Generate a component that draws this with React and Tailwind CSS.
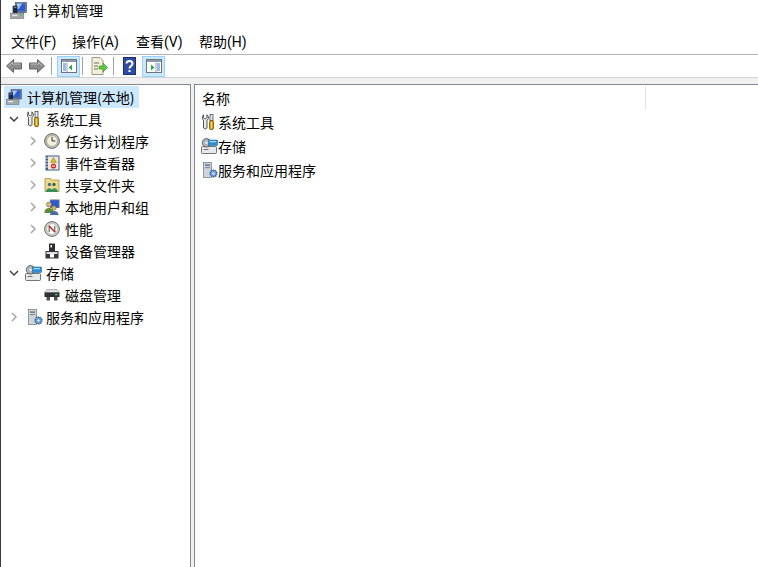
import React from "react";

function Computer({ s = 16 }) {
  return (
    <svg width={s} height={s} viewBox="0 0 16 16" className="shrink-0">
      <rect x="5" y="0.500" width="10.500" height="9.500" fill="#6b7892" stroke="#4d5a74" strokeWidth="0.6" />
      <rect x="6.500" y="1.500" width="7.500" height="7" fill="#2b5fd0" />
      <path d="M6.500 1.500h5l-3.500 5H6.500z" fill="#a9c8f2" />
      <rect x="2.500" y="3.500" width="4.500" height="7" fill="#1f2a44" />
      <rect x="3.500" y="4.500" width="2.500" height="1" fill="#7f8ba5" />
      <rect x="0.500" y="10.500" width="12.500" height="5" fill="#a2a8ad" stroke="#6f767c" strokeWidth="0.6" />
      <rect x="2" y="12" width="5" height="1.200" fill="#e6e8ea" />
      <rect x="9.500" y="12" width="1.500" height="1.200" fill="#49c45a" />
    </svg>
  );
}
function Tools() {
  return (
    <svg width="12" height="16" viewBox="0 0 12 16" className="shrink-0">
      <path d="M1.500 0.800v3L3.200 5l1.700-1.200v-3L6.300 2.500v2.300L5 6.500v7.500Q3.200 16 1.500 14V6.500L0.300 4.800V2.500z" fill="#e8e9ea" stroke="#3e4246" strokeWidth="0.900" />
      <rect x="8" y="0.500" width="3" height="6" fill="#e4e5e5" stroke="#4d5155" strokeWidth="0.800" />
      <rect x="7.600" y="6.500" width="3.800" height="9" rx="1.200" fill="#e9aa10" stroke="#5e4500" strokeWidth="0.800" />
      <path d="M9.500 8v6" stroke="#fbe08a" strokeWidth="0.800" />
    </svg>
  );
}
function Clock() {
  return (
    <svg width="16" height="16" viewBox="0 0 16 16" className="shrink-0">
      <circle cx="8" cy="8" r="7.400" fill="#c7c2ae" stroke="#666b70" />
      <circle cx="8" cy="8" r="5.400" fill="#f5f0dd" stroke="#8f8f86" strokeWidth="0.600" />
      <path d="M8 3.800V8h3.400" fill="none" stroke="#2d2d2d" strokeWidth="1" />
    </svg>
  );
}
function EventLog() {
  return (
    <svg width="16" height="16" viewBox="0 0 16 16" className="shrink-0">
      <rect x="1.500" y="0.500" width="14" height="15" fill="#3f5b8c" />
      <rect x="4" y="1.500" width="10.500" height="13" fill="#eee9d8" />
      <path d="M1 3h3M1 6h3M1 9h3M1 12h3" stroke="#e2e8f2" />
      <path d="M9.500 2.500l2.800 4.800H6.700z" fill="#e9c520" stroke="#6f5c0c" strokeWidth="0.500" />
      <circle cx="9.500" cy="11" r="2.600" fill="#d42c28" />
      <rect x="8" y="10.500" width="3" height="1" fill="#fff" />
    </svg>
  );
}
function Shared() {
  return (
    <svg width="16" height="16" viewBox="0 0 16 16" className="shrink-0">
      <path d="M1 1.500h5.500l1 1.500H15v11.500H1z" fill="#f0d98e" stroke="#a98f3e" strokeWidth="0.800" />
      <circle cx="5.500" cy="7.500" r="1.700" fill="#50698f" />
      <circle cx="10" cy="7.500" r="1.700" fill="#2f6f42" />
      <path d="M2 15c0-5 6.500-5 6.500 0zM7 15c0-5 6.800-5 6.800 0z" fill="#3a8e5a" />
    </svg>
  );
}
function Users() {
  return (
    <svg width="16" height="16" viewBox="0 0 16 16" className="shrink-0">
      <rect x="6" y="0.500" width="9.500" height="8.500" fill="#5e6f90" />
      <rect x="7" y="1.500" width="7.500" height="6.500" fill="#2a5bd0" />
      <circle cx="5" cy="5.500" r="2.600" fill="#d9b877" stroke="#6f5220" strokeWidth="0.500" />
      <path d="M0.500 13c0-5.500 9-5.500 9 0v1h-9z" fill="#5c8a38" />
      <circle cx="10" cy="9" r="2.200" fill="#d9b877" stroke="#6f5220" strokeWidth="0.500" />
      <path d="M6 16c0-5.500 8.500-5.500 8.500 0z" fill="#476aa8" />
    </svg>
  );
}
function Perf() {
  return (
    <svg width="16" height="16" viewBox="0 0 16 16" className="shrink-0">
      <circle cx="8" cy="8" r="7.400" fill="#d6d3c6" stroke="#666b70" />
      <circle cx="8" cy="8" r="5.400" fill="#fff" stroke="#9c9c9c" strokeWidth="0.600" />
      <path d="M5.200 11V5l5.600 6V5" fill="none" stroke="#303030" strokeWidth="0.900" />
      <path d="M4.800 4.800l6.400 6.400" stroke="#c8261e" strokeWidth="1.500" />
    </svg>
  );
}
function Device() {
  return (
    <svg width="16" height="16" viewBox="0 0 16 16" className="shrink-0">
      <rect x="5" y="0.500" width="6" height="8" fill="#2a2d32" />
      <rect x="6.500" y="2" width="1.500" height="2.500" fill="#fff" />
      <rect x="1.500" y="8" width="13" height="7.500" fill="#34373c" />
      <rect x="2.500" y="9" width="11" height="2" fill="#dcdedf" />
      <rect x="6" y="11" width="4" height="3.500" fill="#fff" />
    </svg>
  );
}
function Storage() {
  return (
    <svg width="17" height="16" viewBox="0 0 17 16" className="shrink-0">
      <rect x="0.500" y="8.500" width="15" height="7" rx="1" fill="#e6e8ea" stroke="#4f545a" strokeWidth="0.800" />
      <rect x="2.500" y="11" width="5" height="1" fill="#6e7278" />
      <circle cx="5.500" cy="4.800" r="4.300" fill="#aeb3b8" stroke="#4f545a" strokeWidth="0.800" />
      <circle cx="5.500" cy="4.800" r="1.200" fill="#f0f0f0" />
      <rect x="7.500" y="2" width="9" height="5.500" fill="#2b8fd2" stroke="#1a5f96" strokeWidth="0.500" />
      <rect x="8.500" y="3" width="6.500" height="1.200" fill="#a8dcf8" />
    </svg>
  );
}
function Disk() {
  return (
    <svg width="16" height="16" viewBox="0 0 16 16" className="shrink-0">
      <path d="M3 2.500h10l2.500 3H.5z" fill="#dcdee1" stroke="#77797c" strokeWidth="0.500" />
      <rect x="0.500" y="5.500" width="15" height="4.500" fill="#2d3035" />
      <rect x="11" y="7" width="2.500" height="1.200" fill="#5fd06a" />
      <rect x="2.500" y="10" width="3.500" height="3.500" fill="#4e5155" />
      <rect x="10" y="10" width="3.500" height="3.500" fill="#4e5155" />
    </svg>
  );
}
function Services() {
  return (
    <svg width="16" height="16" viewBox="0 0 16 16" className="shrink-0">
      <rect x="1.500" y="0.500" width="8" height="15" fill="#cfd4da" stroke="#69727e" strokeWidth="0.700" />
      <rect x="3" y="2.500" width="5" height="1.200" fill="#535c68" />
      <rect x="3" y="5" width="5" height="1.200" fill="#858d98" />
      <circle cx="11.500" cy="11.500" r="3.400" fill="#6e9fd4" stroke="#3a6394" strokeWidth="1.400" strokeDasharray="1.400 0.700" />
      <circle cx="11.500" cy="11.500" r="1.100" fill="#fff" />
    </svg>
  );
}
function Chevron({ open, hidden }) {
  if (hidden) return <span className="w-[10px] shrink-0" />;
  return (
    <svg width="10" height="10" viewBox="0 0 10 10" className="shrink-0">
      {open ? (
        <path d="M1 3l4 4 4-4" fill="none" stroke="#404040" strokeWidth="1.500" />
      ) : (
        <path d="M3 1l4 4-4 4" fill="none" stroke="#a6a6a6" strokeWidth="1.500" />
      )}
    </svg>
  );
}
function Arrow({ dir }) {
  return (
    <svg width="16" height="14" viewBox="0 0 16 14" className="shrink-0">
      <path
        d={dir === "l" ? "M0.500 7l7-6.500V4h8v6h-8v3.500z" : "M15.500 7l-7-6.500V4h-8v6h8v3.500z"}
        fill="#8c8c8c"
        stroke="#646464"
      />
      <path d={dir === "l" ? "M2.500 7l4-3.500V5h8" : "M13.500 7l-4-3.500V5h-8"} fill="none" stroke="#c8c8c8" strokeWidth="0.800" />
    </svg>
  );
}
function Pane({ side }) {
  return (
    <svg width="16" height="16" viewBox="0 0 16 16" className="shrink-0">
      <rect x="0.500" y="1.500" width="15" height="13" fill="#fff" stroke="#6d7480" />
      <rect x="1" y="2" width="14" height="2" fill="#8e99a8" />
      {side === "l" ? (
        <>
          <path d="M2 6h3M2 8h3M2 10h3M2 12h3" stroke="#3f74c8" />
          <path d="M6 4.500v9.500" stroke="#9aa2ae" />
          <path d="M11 6.500v6l-3.500-3z" fill="#2fa84a" />
        </>
      ) : (
        <>
          <path d="M11 6h3M11 8h3M11 10h3M11 12h3" stroke="#3f74c8" />
          <path d="M10 4.500v9.500" stroke="#9aa2ae" />
          <path d="M5 6.500v6l3.500-3z" fill="#2fa84a" />
        </>
      )}
    </svg>
  );
}
function Export() {
  return (
    <svg width="17" height="18" viewBox="0 0 17 18" className="shrink-0">
      <path d="M1 .5h8l3 3v14H1z" fill="#f5efd8" stroke="#9a9a88" />
      <path d="M3 6h5M3 9h4M3 12h4" stroke="#6a6a6a" />
      <path d="M8 9h4V6l4.500 4.500L12 15v-3H8z" fill="#5cc63f" stroke="#3b8f2a" strokeWidth="0.600" />
    </svg>
  );
}
function Help() {
  return (
    <svg width="13" height="18" viewBox="0 0 13 18" className="shrink-0">
      <rect x="0.500" y="0.500" width="12" height="17" fill="#2e4ca2" stroke="#1c2f70" />
      <path d="M3.500 6.500C3.500 3 9.500 3 9.500 6.500 9.500 9 6.500 9 6.500 11.500" fill="none" stroke="#fff" strokeWidth="2" />
      <rect x="5.500" y="13" width="2" height="2" fill="#fff" />
    </svg>
  );
}
function Divider() {
  return <span className="h-[18px] w-px bg-[#a0a0a0] shrink-0" />;
}

function TreeRow({ indent, open, noChev, Icon, label, center }) {
  return (
    <div className={`flex items-center h-[22px] ${indent}`}>
      <Chevron open={open} hidden={noChev} />
      <span className={`flex items-center ml-[6px] w-[21px] ${center ? "pl-[2px]" : ""}`}><Icon /></span>
      <span className="text-[14px] text-black whitespace-nowrap leading-[22px]">{label}</span>
    </div>
  );
}

function ListRow({ Icon, label, offset }) {
  return (
    <div className="flex items-center h-[24px] pl-[6px]">
      <span className={`flex w-[17px] items-center ${offset ? "pl-[1px]" : ""}`}><Icon /></span>
      <span className="text-[14px] text-black whitespace-nowrap">{label}</span>
    </div>
  );
}

export default function App() {
  return (
    <div className="w-[758px] h-[567px] overflow-hidden bg-white flex flex-col font-['Noto_Sans_CJK_SC','Liberation_Sans',sans-serif] border-l border-[#3a3a3a]">
      <div className="h-[21px] flex items-center pl-[9px] gap-[6px] shrink-0">
        <Computer s={17} />
        <span className="text-[14px] text-black">计算机管理</span>
      </div>
      <div className="h-[33px] pt-[9px] flex items-center pl-[10px] text-[14px] text-black shrink-0 font-['Roboto','Noto_Sans_CJK_SC',sans-serif]">
        <span className="w-[61px]">文件(F)</span>
        <span className="w-[64px]">操作(A)</span>
        <span className="w-[63px]">查看(V)</span>
        <span>帮助(H)</span>
      </div>
      <div className="h-[23px] border-t border-[#b4b4b4] flex items-center pl-[5px] shrink-0">
        <Arrow dir="l" />
        <span className="w-[7px]" />
        <Arrow dir="r" />
        <span className="w-[6px]" />
        <Divider />
        <span className="ml-[5px] w-[23px] h-[21px] flex items-center justify-center bg-[#cce8ff] border border-[#99d1ff]"><Pane side="l" /></span>
        <span className="w-[2px]" />
        <Divider />
        <span className="ml-[8px] mr-[5px]"><Export /></span>
        <Divider />
        <span className="ml-[9px] mr-[6px]"><Help /></span>
        <span className="w-[23px] h-[21px] flex items-center justify-center bg-[#cce8ff] border border-[#99d1ff]"><Pane side="r" /></span>
      </div>
      <div className="flex-1 min-h-0 flex flex-col bg-[#f0f0f0] border-t border-[#d4d4d4] pt-[6px]">
        <div className="flex-1 min-h-0 flex bg-[#f0f0f0]">
          <div className="w-[190px] bg-white border-t border-r border-[#828790] pl-[3px] pt-[1px] shrink-0">
            <div className="flex items-center h-[22px]">
              <span className="flex items-center h-[22px] bg-[#cce8ff] pl-[2px] pr-[5px] gap-[5px]">
                <Computer s={16} />
                <span className="text-[14px] text-black whitespace-nowrap">计算机管理(本地)</span>
              </span>
            </div>
            <TreeRow indent="pl-[5px]" open center Icon={Tools} label="系统工具" />
            <TreeRow indent="pl-[24px]" Icon={Clock} label="任务计划程序" />
            <TreeRow indent="pl-[24px]" Icon={EventLog} label="事件查看器" />
            <TreeRow indent="pl-[24px]" Icon={Shared} label="共享文件夹" />
            <TreeRow indent="pl-[24px]" Icon={Users} label="本地用户和组" />
            <TreeRow indent="pl-[24px]" Icon={Perf} label="性能" />
            <TreeRow indent="pl-[24px]" noChev Icon={Device} label="设备管理器" />
            <TreeRow indent="pl-[5px]" open Icon={Storage} label="存储" />
            <TreeRow indent="pl-[24px]" noChev Icon={Disk} label="磁盘管理" />
            <TreeRow indent="pl-[5px]" center Icon={Services} label="服务和应用程序" />
          </div>
          <div className="w-[3px] shrink-0" />
          <div className="flex-1 bg-white border-t border-l border-[#828790] pt-[1px]">
            <div className="h-[24px] w-[451px] border-r border-[#e5e5e5] flex items-center pl-[7px] text-[14px] text-black">名称</div>
            <ListRow offset Icon={Tools} label="系统工具" />
            <ListRow Icon={Storage} label="存储" />
            <ListRow offset Icon={Services} label="服务和应用程序" />
          </div>
        </div>
      </div>
    </div>
  );
}
